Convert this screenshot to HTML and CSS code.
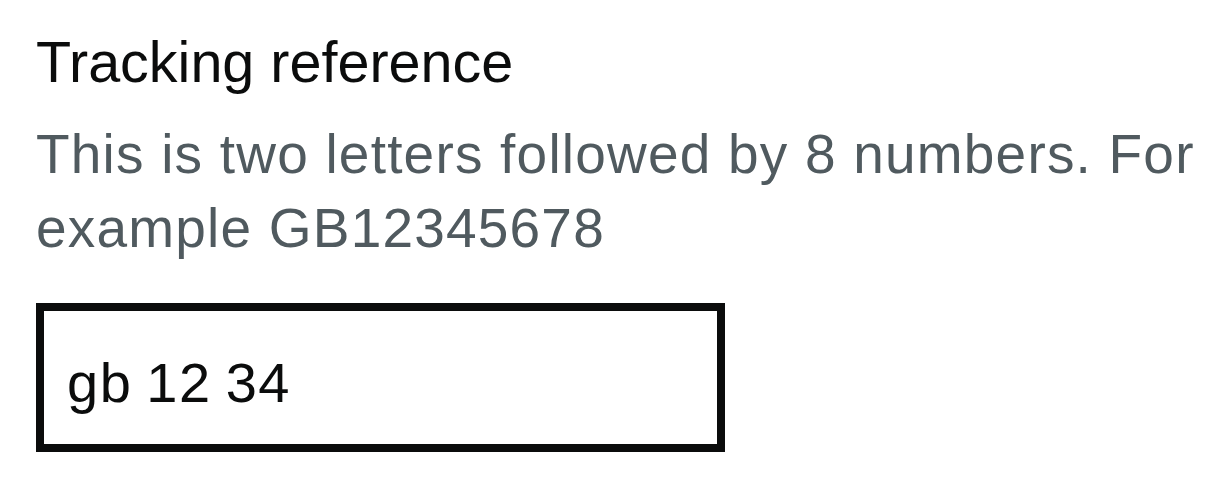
FILE: index.html
```html
<!DOCTYPE html>
<html lang="en">
<head>
<meta charset="utf-8">
<title>Tracking reference</title>
<link rel="stylesheet" href="styles.css">
</head>
<body>
<div class="form-group">
  <label class="label" for="tracking">Tracking reference</label>
  <div class="hint">This is two letters followed by 8 numbers. For example GB12345678</div>
  <input class="input" id="tracking" type="text" value="gb 12 34">
</div>
</body>
</html>
```
FILE: styles.css
```css
html, body {
  margin: 0;
  padding: 0;
  background: #ffffff;
}
body {
  font-family: "Liberation Sans", Arial, sans-serif;
  color: #0b0c0c;
}
.form-group {
  padding: 25px 0 0 36px;
  display: flex;
  flex-direction: column;
  align-items: flex-start;
}
.label {
  display: block;
  font-size: 57.5px;
  line-height: 74px;
  color: #0b0c0c;
}
.hint {
  margin-top: 18px;
  font-size: 55px;
  line-height: 74px;
  letter-spacing: 1.2px;
  color: #505a5f;
  width: 1180px;
}
.input {
  margin: 38px 0 0 0;
  box-sizing: border-box;
  width: 689px;
  height: 149px;
  border: 8px solid #0b0c0c;
  border-radius: 0;
  padding: 9px 21px 0 23px;
  font-family: "Liberation Sans", Arial, sans-serif;
  font-size: 56px;
  letter-spacing: 1.5px;
  word-spacing: -3px;
  color: #0b0c0c;
  background: #ffffff;
  outline: none;
}
```
